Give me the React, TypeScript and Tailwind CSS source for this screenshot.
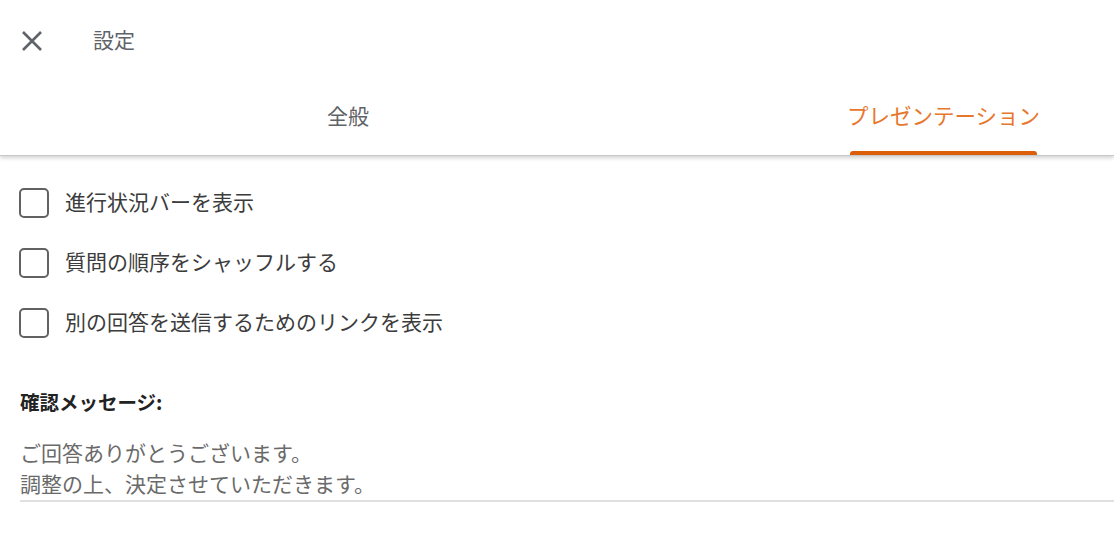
import React from "react";

const font = { fontFamily: '"Noto Sans CJK JP", "Noto Sans", sans-serif' };

function Check({ label }: { label: string }) {
  return (
    <div className="flex items-center h-[60px]">
      <div className="w-[30px] h-[30px] border-[2.5px] border-[#626262] rounded-[5px] ml-[19px]" />
      <span className="ml-[16px] -mt-[3px] text-[21px] text-[#3c3c3c] leading-none">{label}</span>
    </div>
  );
}

export default function App() {
  return (
    <div className="w-[1114px] h-[547px] bg-white overflow-hidden" style={font}>
      <div className="relative z-10 bg-white shadow-[0_2px_4px_rgba(0,0,0,0.18)] border-b border-[#c8c8c8]">
        <div className="flex items-center h-[82px]">
          <svg className="ml-[21px] -mt-[1px]" width="22" height="22" viewBox="0 0 22 22">
            <path d="M2 2 L20 20 M20 2 L2 20" stroke="#5f6368" strokeWidth="2.6" strokeLinecap="butt" />
          </svg>
          <span className="ml-[50px] -mt-[3px] text-[21px] text-[#5f6368] leading-none">設定</span>
        </div>
        <div className="flex h-[73px]">
          <div className="w-[696px] flex items-center justify-center pb-[7px]">
            <span className="text-[21px] text-[#5f6368] leading-none">全般</span>
          </div>
          <div className="flex-1 pl-[151px]">
            <div className="inline-flex flex-col h-full">
              <div className="flex-1 flex items-center pb-[3px]">
                <span className="text-[21.5px] text-[#e8772e] leading-none">プレゼンテーション</span>
              </div>
              <div className="h-[4px] mx-[3px] bg-[#dc5d0a] rounded-t-[3px]" />
            </div>
          </div>
        </div>
      </div>
      <div className="pt-[17px]">
        <Check label="進行状況バーを表示" />
        <Check label="質問の順序をシャッフルする" />
        <Check label="別の回答を送信するためのリンクを表示" />
      </div>
      <div className="ml-[20px] mt-[39px]">
        <div className="text-[19.5px] font-bold text-[#222] leading-none">確認メッセージ:</div>
        <div className="mt-[25px] border-b-2 border-[#e0e0e0] pb-[1px]">
          <div className="text-[21px] text-[#6a6a6a] leading-[31px]">ご回答ありがとうございます。</div>
          <div className="text-[21px] text-[#6a6a6a] leading-[31px]">調整の上、決定させていただきます。</div>
        </div>
      </div>
    </div>
  );
}
